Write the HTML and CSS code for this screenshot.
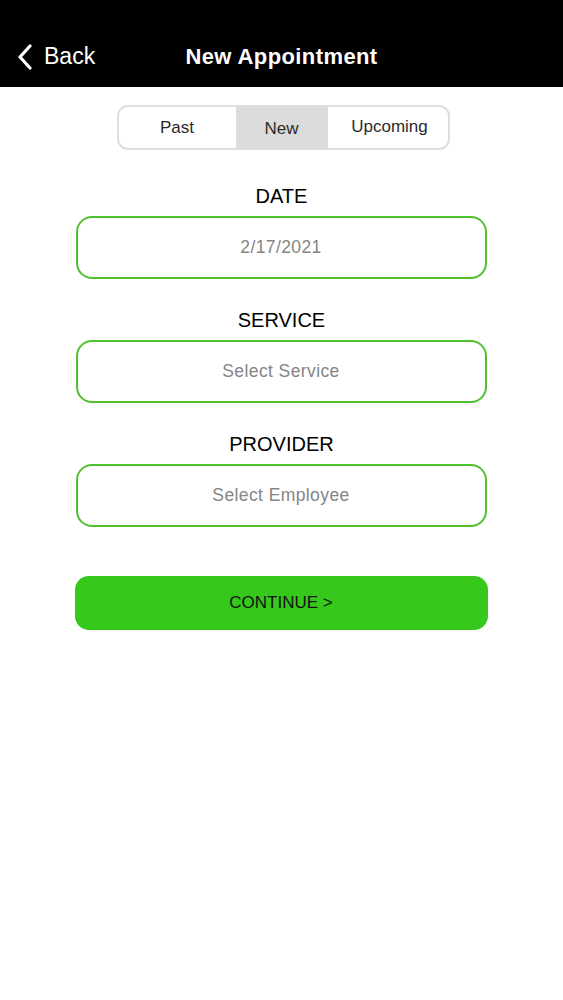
FILE: index.html
```html
<!DOCTYPE html>
<html>
<head>
<meta charset="utf-8">
<link rel="stylesheet" href="styles.css">
</head>
<body>
<header class="navbar">
  <div class="back">
    <svg class="chev" width="16" height="26" viewBox="0 0 16 26"><path d="M13 2 L3 13 L13 24" fill="none" stroke="#fff" stroke-width="3.2" stroke-linecap="round" stroke-linejoin="round"/></svg>
    <span>Back</span>
  </div>
  <div class="title">New Appointment</div>
</header>
<main class="content">
  <div class="segments">
    <div class="seg seg-past">Past</div>
    <div class="seg seg-new active">New</div>
    <div class="seg seg-up">Upcoming</div>
  </div>
  <div class="field">
    <div class="label">DATE</div>
    <div class="input">2/17/2021</div>
  </div>
  <div class="field">
    <div class="label">SERVICE</div>
    <div class="input">Select Service</div>
  </div>
  <div class="field">
    <div class="label">PROVIDER</div>
    <div class="input">Select Employee</div>
  </div>
  <div class="btn">CONTINUE &gt;</div>
</main>
</body>
</html>
```

FILE: styles.css
```css
* { box-sizing: border-box; }
html, body { margin: 0; padding: 0; background: #fff; }
body { font-family: "Liberation Sans", Arial, sans-serif; width: 563px; }
.navbar {
  position: relative;
  height: 87px;
  background: #000;
  color: #fff;
  display: flex;
  align-items: center;
  padding-top: 26px;
}
.back {
  display: flex;
  align-items: center;
  padding-left: 17px;
  font-size: 23px;
  gap: 11px;
}
.chev { display: block; }
.title {
  position: absolute;
  left: 0; right: 0;
  top: 44px;
  text-align: center;
  font-size: 22px;
  letter-spacing: 0.4px;
  font-weight: bold;
  pointer-events: none;
}
.content {
  display: flex;
  flex-direction: column;
  align-items: center;
  padding-top: 18px;
}
.segments {
  display: flex;
  width: 333px;
  height: 45px;
  border: 2px solid #dedede;
  border-radius: 11px;
  overflow: hidden;
  margin-left: 3px;
}
.seg {
  display: flex;
  align-items: center;
  justify-content: center;
  font-size: 17px;
  color: #2a2a2a;
}
.seg-past { width: 117px; }
.seg-new { width: 92px; padding-top: 2px; }
.seg-up { flex: 1; padding-bottom: 2px; padding-left: 4px; }
.active { background: #dcdcdc; }
.field {
  display: flex;
  flex-direction: column;
  align-items: center;
  margin-top: 29px;
}
.segments + .field { margin-top: 34px; }
.label {
  font-size: 20px;
  line-height: 24px;
  color: #000;
  margin-bottom: 8px;
}
.input {
  width: 411px;
  height: 63px;
  border: 2px solid #4fc12f;
  border-radius: 16px;
  display: flex;
  align-items: center;
  justify-content: center;
  font-size: 17.5px;
  letter-spacing: 0.4px;
  color: #858585;
  margin-right: 1px;
}
.btn {
  margin-top: 49px;
  width: 413px;
  height: 54px;
  background: #36c91b;
  border-radius: 14px;
  display: flex;
  align-items: center;
  justify-content: center;
  font-size: 17px;
  color: #111;
  margin-right: 1px;
}
```
